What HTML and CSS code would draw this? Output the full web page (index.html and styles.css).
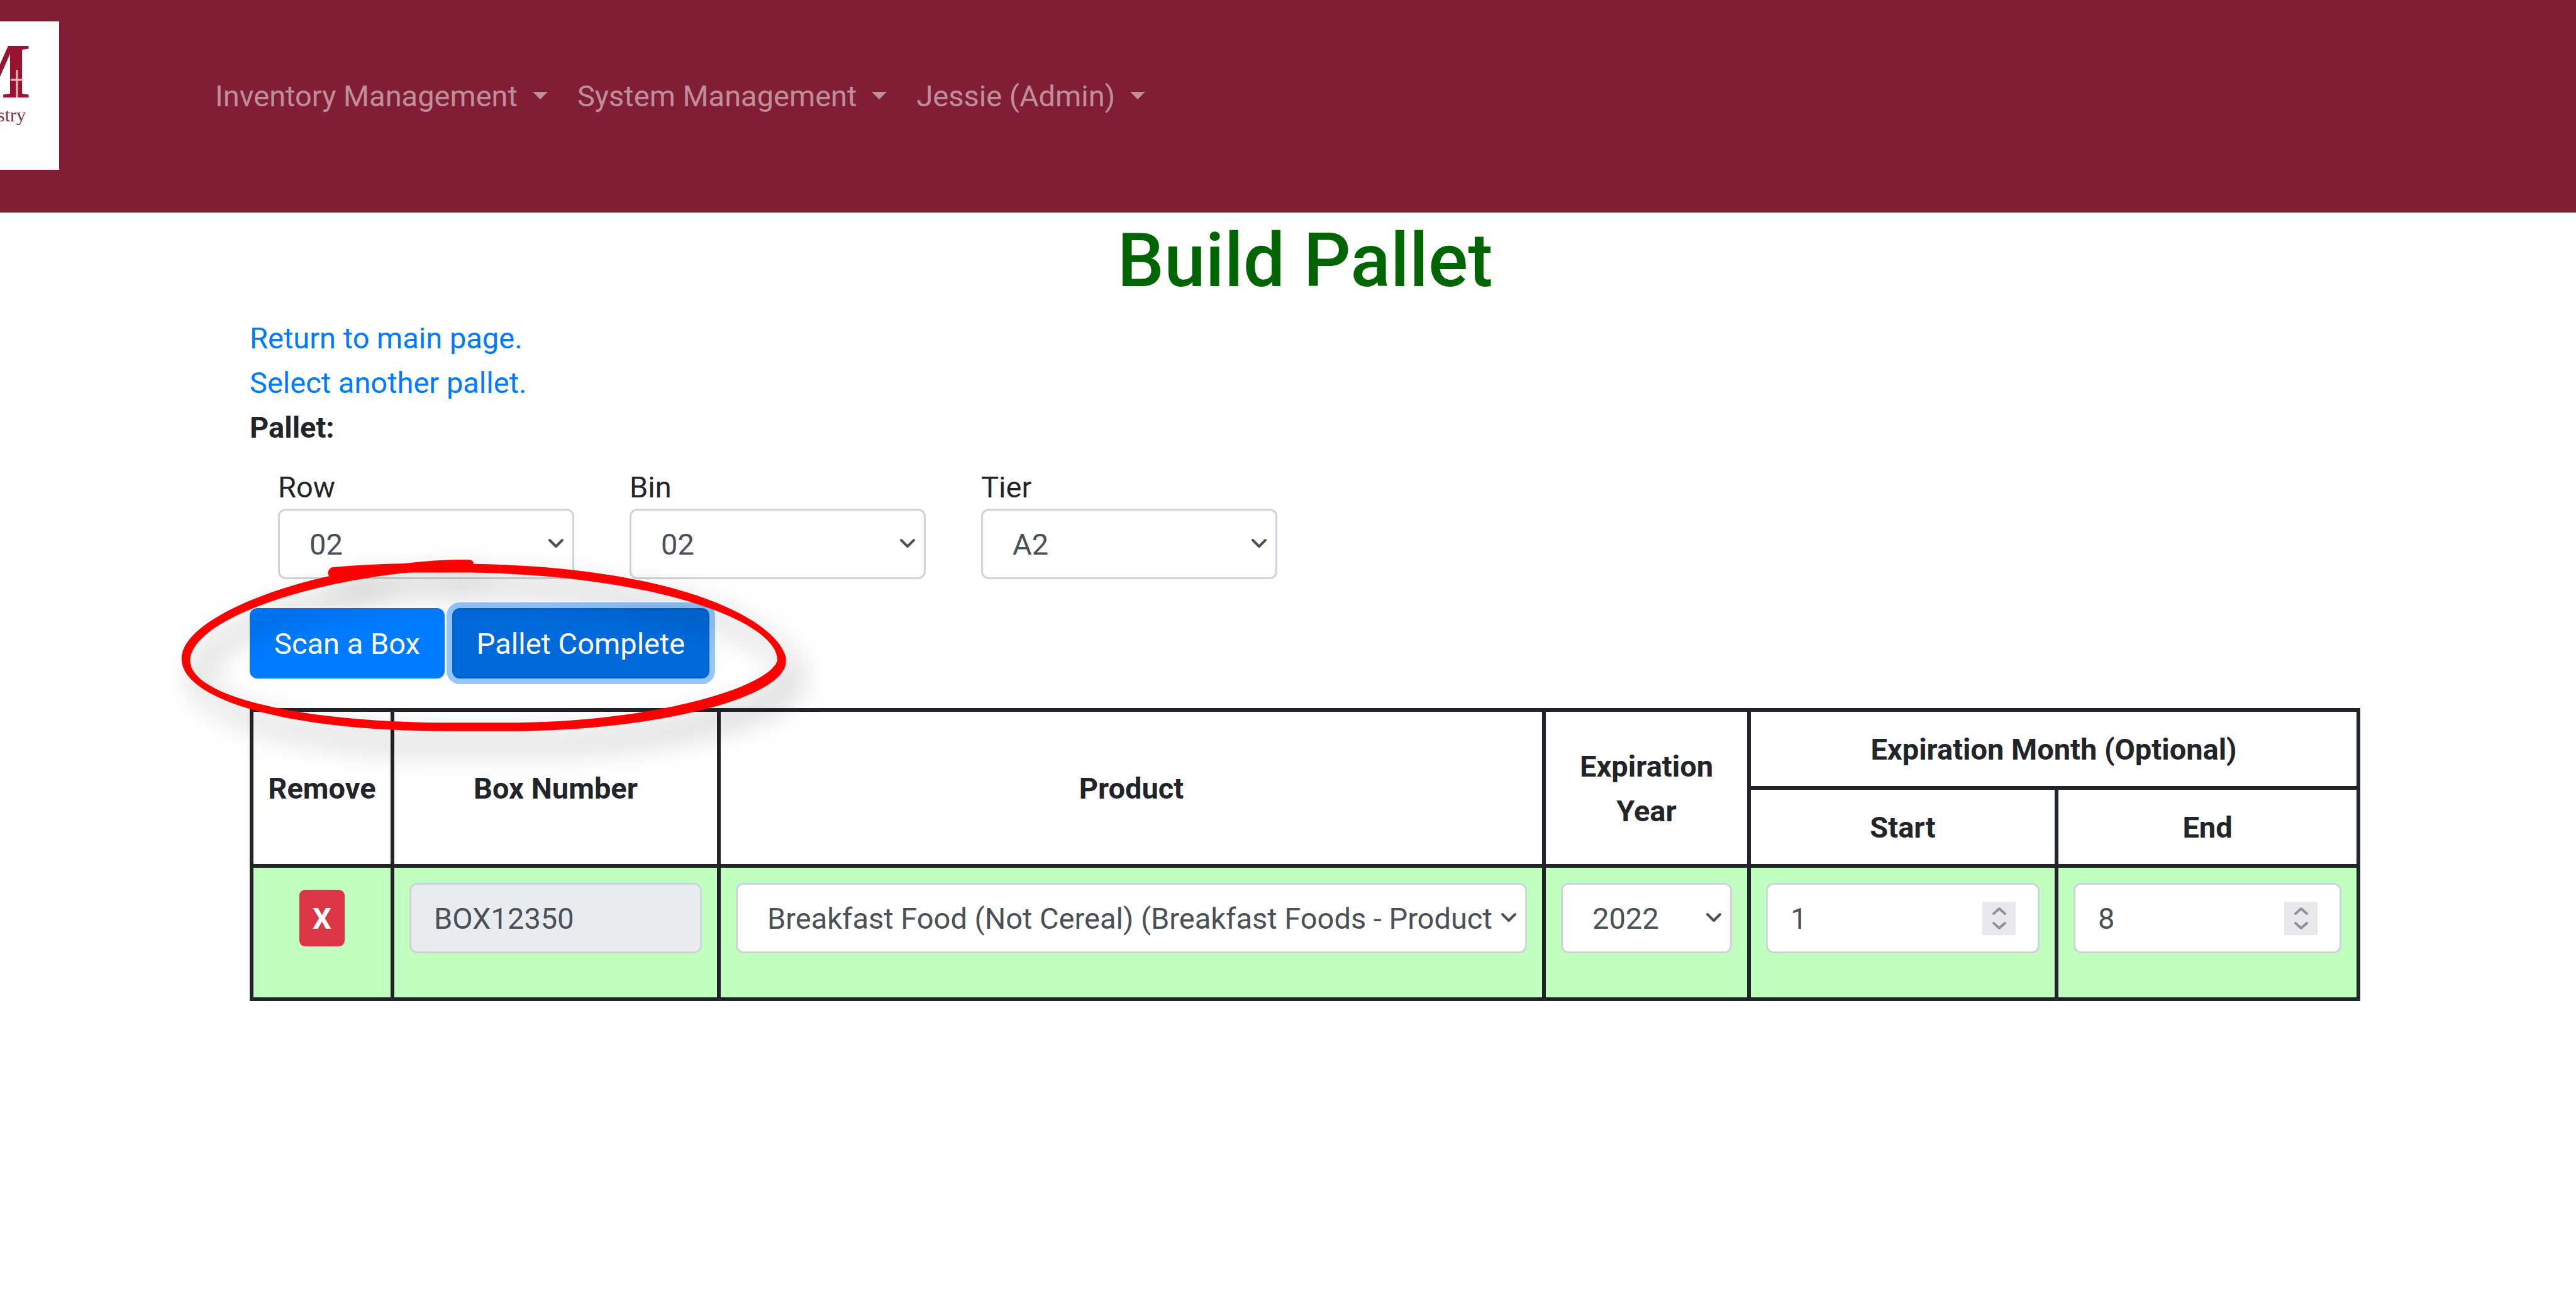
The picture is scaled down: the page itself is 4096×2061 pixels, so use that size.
FILE: index.html
```html
<!DOCTYPE html>
<html lang="en">
<head>
<meta charset="utf-8">
<meta name="viewport" content="width=device-width, initial-scale=1">
<title>Build Pallet</title>
<link rel="stylesheet" href="styles.css">
</head>
<body>
<header class="navbar">
  <a class="brand" href="#" aria-label="Home">
    <span class="brand-mark">M</span>
    <span class="brand-name">stry</span>
    <svg class="brand-cross" viewBox="0 0 20 44" aria-hidden="true"><path d="M10 0V44M0 16H20" stroke="#e9b9c0" stroke-width="3" fill="none"/></svg>
  </a>
  <nav class="menu">
    <a class="menu-link" href="#">Inventory Management</a>
    <a class="menu-link" href="#">System Management</a>
    <a class="menu-link" href="#">Jessie (Admin)</a>
  </nav>
</header>

<main class="page">
  <h1 class="title">Build Pallet</h1>
  <a class="link" href="#">Return to main page.</a>
  <a class="link" href="#">Select another pallet.</a>
  <form>
    <div class="section-label">Pallet:</div>
    <div class="location">
      <div class="field">
        <label for="row">Row</label>
        <select class="control select" id="row"><option>02</option></select>
      </div>
      <div class="field">
        <label for="bin">Bin</label>
        <select class="control select" id="bin"><option>02</option></select>
      </div>
      <div class="field">
        <label for="tier">Tier</label>
        <select class="control select" id="tier"><option>A2</option></select>
      </div>
    </div>

    <div class="actions">
      <button class="btn" type="button">Scan a Box</button>
      <button class="btn btn-active" type="button">Pallet Complete</button>
      <svg class="highlight" viewBox="0 0 1600 1568" preserveAspectRatio="none" aria-hidden="true">
        <path fill="#f00" fill-rule="evenodd" d="M425 215C260 330 78 580 78 840C78 1150 330 1386 700 1386L840 1386C1200 1386 1499 1130 1499 860L1499 830C1480 560 1260 150 765 122Q763 94 755 92Q700 82 600 120Q500 126 430 150Q417 185 425 215Z
        M760 188C1200 215 1479 560 1479 850C1460 1060 1180 1322 840 1322L680 1322C360 1310 98 1130 98 850C105 560 340 290 590 195Q605 189 620 188Z"/>
      </svg>
    </div>

    <table class="boxes">
      <colgroup>
        <col class="col-remove"><col class="col-number"><col><col class="col-year"><col class="col-start"><col class="col-end">
      </colgroup>
      <thead>
        <tr>
          <th rowspan="2">Remove</th>
          <th rowspan="2">Box Number</th>
          <th rowspan="2">Product</th>
          <th rowspan="2">Expiration Year</th>
          <th colspan="2">Expiration Month (Optional)</th>
        </tr>
        <tr>
          <th>Start</th>
          <th>End</th>
        </tr>
      </thead>
      <tbody>
        <tr>
          <td class="remove-cell"><button class="btn-remove" type="button" aria-label="Remove box">X</button></td>
          <td><input class="control" type="text" value="BOX12350" aria-label="Box number" disabled></td>
          <td><select class="control select" aria-label="Product"><option>Breakfast Food (Not Cereal) (Breakfast Foods - Product</option></select></td>
          <td><select class="control select" aria-label="Expiration year"><option>2022</option></select></td>
          <td><input class="control number" type="number" value="1" min="1" max="12" aria-label="Start month"></td>
          <td><input class="control number" type="number" value="8" min="1" max="12" aria-label="End month"></td>
        </tr>
      </tbody>
    </table>
  </form>
</main>
</body>
</html>
```
FILE: styles.css
```css
*, *::before, *::after { box-sizing: border-box; }

body {
  margin: 0;
  background: #fff;
  color: #212529;
  font: 400 47px/71px Roboto, "Liberation Sans", sans-serif;
}

button, input, select { margin: 0; font: inherit; }

/* Top bar */
.navbar {
  display: flex;
  align-items: center;
  gap: 248px;
  padding: 34px 0 68px;
  background: #811e35;
}

.brand {
  position: relative;
  display: flex;
  flex: none;
  flex-direction: column;
  align-items: flex-end;
  width: 94px;
  height: 236px;
  padding-top: 26px;
  overflow: hidden;
  background: #fff;
  color: #971530;
  font-family: "Liberation Serif", serif;
  text-decoration: none;
}

.brand-mark {
  padding-right: 45px;
  font-size: 124px;
  font-weight: 700;
  line-height: 108px;
}

.brand-name {
  padding-right: 53px;
  color: #7c3044;
  font-size: 30px;
  line-height: 30px;
}

.brand-cross {
  position: absolute;
  top: 77px;
  left: 17px;
  width: 20px;
  height: 44px;
}

.menu { display: flex; gap: 47px; }

.menu-link {
  display: flex;
  align-items: center;
  gap: 24px;
  color: rgba(255, 255, 255, .5);
  text-decoration: none;
  white-space: nowrap;
}

.menu-link::after {
  content: "";
  border-top: 12px solid;
  border-right: 12px solid transparent;
  border-left: 12px solid transparent;
}

/* Page */
.page { padding: 0 343px 0 397px; }

.title {
  margin: 0 0 16px;
  padding-top: 6px;
  color: #006400;
  font-size: 118px;
  font-weight: 500;
  line-height: 142px;
  text-align: center;
}

.link {
  display: block;
  width: fit-content;
  color: #007bff;
  text-decoration: none;
}

.section-label { font-weight: 700; }

.location {
  display: flex;
  gap: 88px;
  padding: 26px 45px 0;
}

.field { width: 471px; }

.field label { display: block; line-height: 68px; }

.control {
  display: block;
  width: 100%;
  height: 112px;
  padding: 0 36px;
  border: 3px solid #ced4da;
  border-radius: 12px;
  background-color: #fff;
  color: #495057;
}

.control:disabled { background-color: #e9ecef; }

.select {
  padding: 0 44px 0 47px;
  appearance: none;
  background-image: url("data:image/svg+xml,%3Csvg xmlns='http://www.w3.org/2000/svg' viewBox='0 0 26 18'%3E%3Cpath d='M3 3l10 10L23 3' fill='none' stroke='%23495057' stroke-width='4' stroke-linecap='round' stroke-linejoin='round'/%3E%3C/svg%3E");
  background-position: right 13px center;
  background-repeat: no-repeat;
  background-size: 26px 18px;
}

.number {
  appearance: textfield;
  background-image: url("data:image/svg+xml,%3Csvg xmlns='http://www.w3.org/2000/svg' viewBox='0 0 53 53'%3E%3Cpath fill='%23e9e9ed' d='M0 0h53v53H0z'/%3E%3Cpath d='M18 19l9-8 9 8M18 34l9 8 9-8' fill='none' stroke='%238f8f9d' stroke-width='4' stroke-linecap='round' stroke-linejoin='round'/%3E%3C/svg%3E");
  background-position: right 35px center;
  background-repeat: no-repeat;
  background-size: 53px 53px;
}

.number::-webkit-inner-spin-button { display: none; }

/* Buttons */
.actions {
  position: relative;
  display: flex;
  gap: 12px;
  margin: 46px 0 47px;
}

.btn {
  height: 112px;
  padding: 0 36px;
  border: 3px solid #007bff;
  border-radius: 12px;
  background: #007bff;
  color: #fff;
}

.btn-active {
  border-color: #0062cc;
  background: #0069d9;
  box-shadow: 0 0 0 9px rgba(38, 143, 255, .5);
}

.btn-remove {
  height: 90px;
  padding: 0 21px;
  border: 0;
  border-radius: 9px;
  background: #dc3545;
  color: #fff;
  font-weight: 700;
}

/* Hand-drawn ring around the buttons */
.highlight {
  position: absolute;
  top: -96px;
  left: -161px;
  width: 1082px;
  height: 330px;
  overflow: visible;
  filter: drop-shadow(20px 26px 24px rgba(0, 0, 0, .34));
  pointer-events: none;
}

/* Box table */
.boxes {
  width: 100%;
  border-collapse: collapse;
  table-layout: fixed;
}

.boxes th, .boxes td {
  padding: 24px 24px 23px;
  border: 6px solid #212529;
}

.boxes th { padding-right: 20px; padding-left: 20px; font-weight: 700; }

.boxes td {
  padding-bottom: 70px;
  background: #c1ffc1;
}

.boxes .remove-cell { text-align: center; }

.remove-cell .btn-remove { display: inline-block; vertical-align: middle; }

.col-remove { width: 224px; }
.col-number { width: 519px; }
.col-year { width: 326px; }
.col-start { width: 489px; }
.col-end { width: 480px; }
```
